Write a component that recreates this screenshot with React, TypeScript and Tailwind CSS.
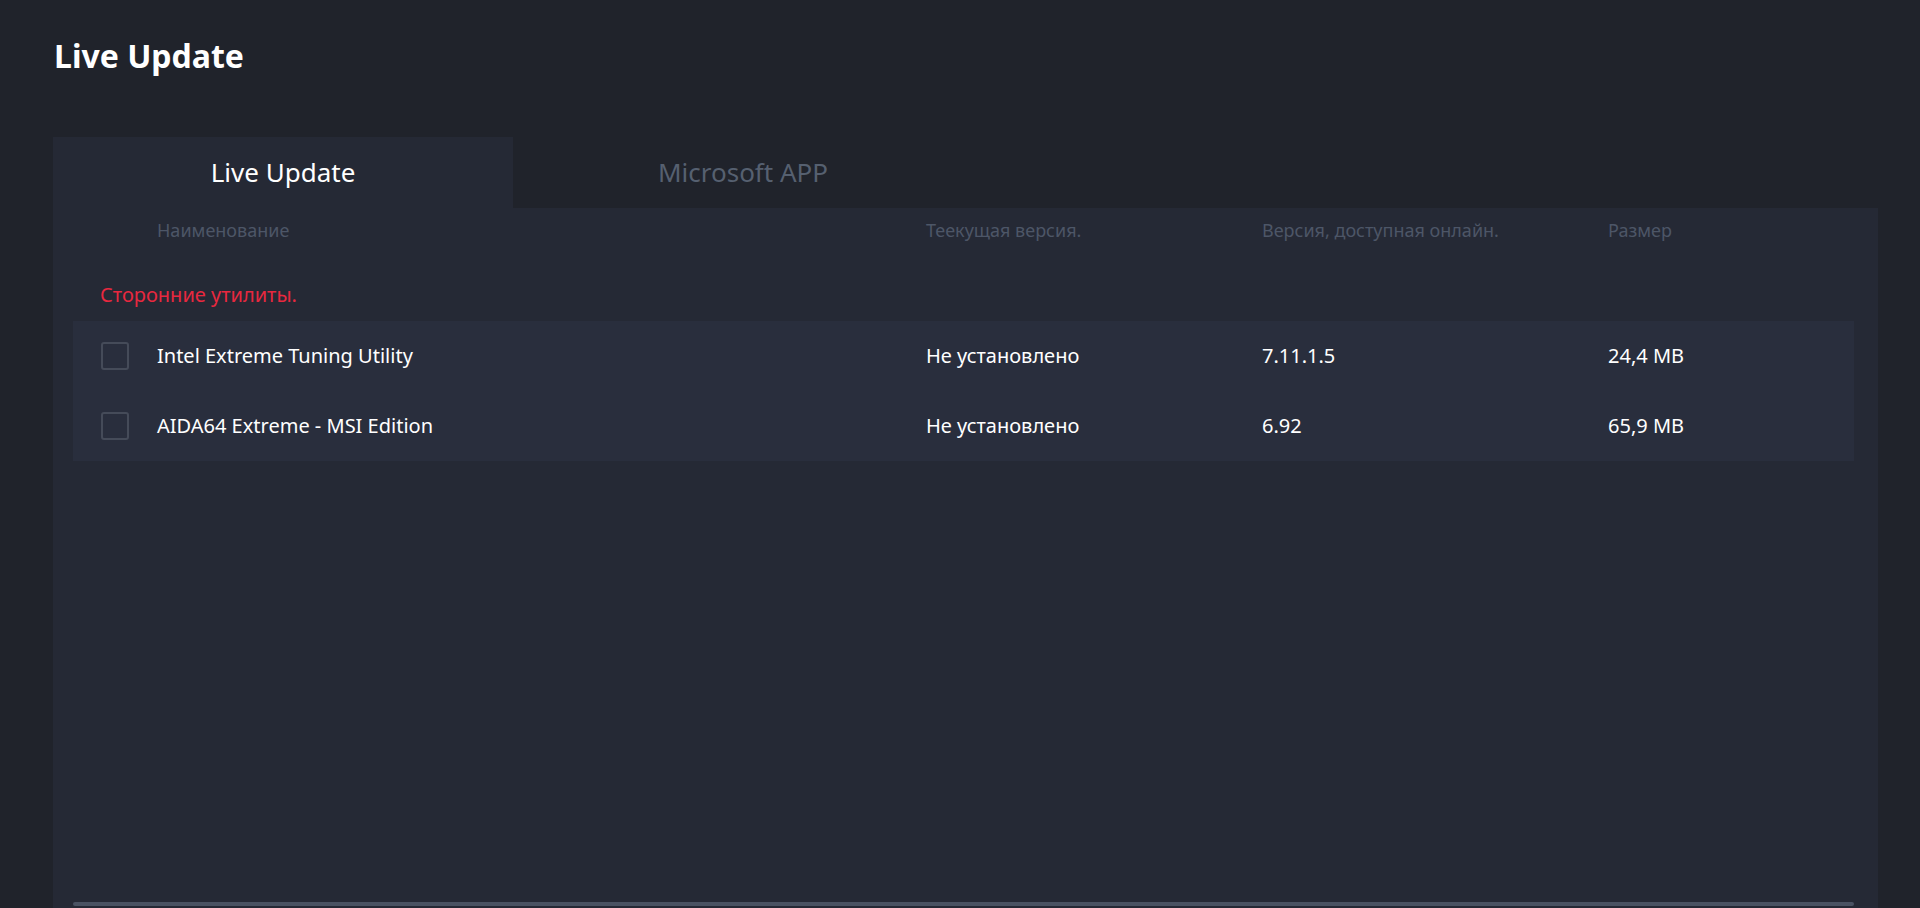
const rows = [
  { name: 'Intel Extreme Tuning Utility', current: 'Не установлено', online: '7.11.1.5', size: '24,4 MB' },
  { name: 'AIDA64 Extreme - MSI Edition', current: 'Не установлено', online: '6.92', size: '65,9 MB' },
]

export default function App() {
  return (
    <div
      className="flex h-[908px] flex-col overflow-hidden bg-[#20232b] text-white"
      style={{ fontFamily: '"Noto Sans", "Open Sans", sans-serif' }}
    >
      <h1 className="px-[54px] pt-[34px] text-[32px] font-bold leading-[44px]">Live Update</h1>

      <div className="mt-[59px] ml-[53px] mr-[42px] flex flex-1 flex-col">
        {/* tabs */}
        <div className="flex h-[71px]">
          <button className="flex w-[460px] items-center justify-center bg-[#252935] text-[26px] text-white">
            Live Update
          </button>
          <button className="flex w-[460px] items-center justify-center text-[26px] text-[#566070]">
            Microsoft APP
          </button>
        </div>

        <div className="flex flex-1 flex-col bg-[#252935] pl-[20px] pr-[24px]">
          {/* header */}
          <div className="flex h-[44px] items-center text-[18px] text-[#4d5667]">
            <div className="w-[84px]" />
            <div className="w-[769px]">Наименование</div>
            <div className="w-[336px]">Теекущая версия.</div>
            <div className="w-[346px]">Версия, доступная онлайн.</div>
            <div>Размер</div>
          </div>

          <div className="px-[27px] pt-[30px] pb-[13px] text-[20px] leading-[26px] text-[#e8283f]">Сторонние утилиты.</div>

          <div className="bg-[#292e3d]">
            {rows.map((r) => (
              <div key={r.name} className="flex h-[70px] items-center text-[20px] text-white">
                <div className="w-[84px] pl-[28px]">
                  <div className="h-[28px] w-[28px] rounded-[3px] border-2 border-[#454b59]" />
                </div>
                <div className="w-[769px]">{r.name}</div>
                <div className="w-[336px]">{r.current}</div>
                <div className="w-[346px]">{r.online}</div>
                <div>{r.size}</div>
              </div>
            ))}
          </div>

          <div className="flex-1" />
          <div className="mb-[2px] h-[4px] rounded-full bg-[#4a5262]" />
        </div>
      </div>
    </div>
  )
}
